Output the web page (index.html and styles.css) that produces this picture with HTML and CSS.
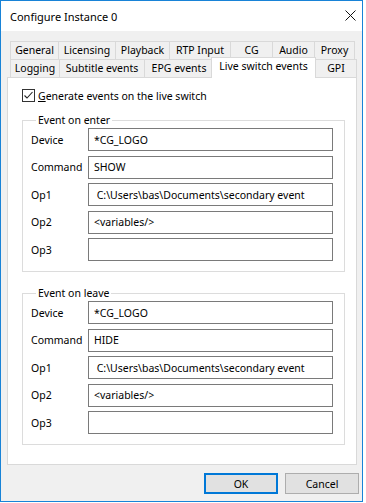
FILE: index.html
```html
<!DOCTYPE html>
<html lang="en">
<head>
    <meta charset="UTF-8">
    <meta name="viewport" content="width=device-width, initial-scale=1.0">
    <title>Configure Instance 0</title>
    <link rel="stylesheet" href="styles.css">
</head>
<body>
    <div class="window">
        <div class="titlebar">
            <span class="title">Configure Instance 0</span>
            <svg class="close" width="11" height="11" viewBox="0 0 11 11">
                <path d="M0.5 0.5 L10.5 10.5 M10.5 0.5 L0.5 10.5" stroke="#111" stroke-width="1" fill="none"/>
            </svg>
        </div>
        <div class="content">
            <div class="tabs">
                <div class="tabrow">
                    <div class="tab t-general">General</div>
                    <div class="tab t-licensing">Licensing</div>
                    <div class="tab t-playback">Playback</div>
                    <div class="tab t-rtp">RTP Input</div>
                    <div class="tab t-cg">CG</div>
                    <div class="tab t-audio">Audio</div>
                    <div class="tab t-proxy">Proxy</div>
                </div>
                <div class="tabrow">
                    <div class="tab t-logging">Logging</div>
                    <div class="tab t-subtitle">Subtitle events</div>
                    <div class="tab t-epg">EPG events</div>
                    <div class="tab t-live active">Live switch events</div>
                    <div class="tab t-gpi">GPI</div>
                </div>
            </div>
            <div class="panel">
                <label class="check">
                    <span class="box">
                        <svg width="11" height="11" viewBox="0 0 11 11">
                            <path d="M1.5 5.5 L4 8 L9.5 2" stroke="#222" stroke-width="1.1" fill="none"/>
                        </svg>
                    </span>
                    <span><u>G</u>enerate events on the live switch</span>
                </label>

                <fieldset class="group">
                    <legend>Event on enter</legend>
                    <div class="field"><label>Device</label><input type="text" value="*CG_LOGO"></div>
                    <div class="field"><label>Command</label><input type="text" value="SHOW"></div>
                    <div class="field"><label>Op1</label><input type="text" value=" C:\Users\bas\Documents\secondary event"></div>
                    <div class="field"><label>Op2</label><input type="text" value="&lt;variables/&gt;"></div>
                    <div class="field"><label>Op3</label><input type="text" value=""></div>
                </fieldset>

                <fieldset class="group leave">
                    <legend>Event on leave</legend>
                    <div class="field"><label>Device</label><input type="text" value="*CG_LOGO"></div>
                    <div class="field"><label>Command</label><input type="text" value="HIDE"></div>
                    <div class="field"><label>Op1</label><input type="text" value=" C:\Users\bas\Documents\secondary event"></div>
                    <div class="field"><label>Op2</label><input type="text" value="&lt;variables/&gt;"></div>
                    <div class="field"><label>Op3</label><input type="text" value=""></div>
                </fieldset>
            </div>
            <div class="buttons">
                <button class="btn default">OK</button>
                <button class="btn">Cancel</button>
            </div>
        </div>
    </div>
</body>
</html>
```

FILE: styles.css
```css
* {
    box-sizing: border-box;
}

body {
    margin: 0;
    padding: 0;
    background: #fff;
    font-family: "Noto Sans", "Open Sans", sans-serif;
    font-size: 10.5px;
    color: #000;
}

.window {
    width: 363px;
    height: 502px;
    border: 1px solid #1883d7;
    display: flex;
    flex-direction: column;
}

.titlebar {
    height: 30px;
    background: #fff;
    display: flex;
    align-items: center;
    justify-content: space-between;
    padding: 0 6px 0 9px;
}
.title {
    font-size: 11px;
    margin-top: 1px;
}
.close {
    display: block;
    margin-top: -1px;
}

.content {
    flex: 1;
    background: #f0f0f0;
    padding: 10px 3px 0 6px;
}

/* tabs */
.tabs {
    width: 350px;
    padding: 0 0 0 3px;
}
.tabrow {
    display: flex;
    align-items: flex-end;
    height: 18px;
}
.tab {
    flex: none;
    height: 18px;
    line-height: 17px;
    text-align: center;
    white-space: nowrap;
    border: 1px solid #d9d9d9;
    border-bottom: none;
    margin-right: -1px;
    background: #f0f0f0;
}
.tab.active {
    position: relative;
    z-index: 1;
    height: 21px;
    line-height: 17px;
    margin: 0 -1px -1px -2px;
    background: #fff;
}

.t-general { width: 49px; }
.t-licensing { width: 58px; }
.t-playback { width: 55px; }
.t-rtp { width: 62px; }
.t-cg { width: 43px; }
.t-audio { width: 43px; }
.t-proxy { width: 41px; }
.t-logging { width: 50px; }
.t-subtitle { width: 86px; }
.t-epg { width: 70px; }
.t-live { width: 105px; }
.t-gpi { width: 42px; }

/* panel */
.panel {
    position: relative;
    width: 350px;
    height: 388px;
    background: #fff;
    border: 1px solid #d9d9d9;
    padding: 11px 0 0 14px;
}

.check {
    display: flex;
    align-items: center;
    height: 13px;
    gap: 3px;
}
.box {
    width: 13px;
    height: 13px;
    border: 1px solid #333;
    background: #fff;
    display: block;
}
.box svg {
    display: block;
}

.group {
    width: 323px;
    margin: 11px 0 0 0;
    padding: 1px 10px 10px 8px;
    border: 1px solid #dcdcdc;
    min-width: 0;
}
.group.leave {
    margin-top: 14px;
}
.group legend {
    padding: 0 2px;
    margin-left: 5px;
    line-height: 14px;
}

.field {
    display: flex;
    align-items: center;
    margin-top: 4.5px;
}
.field:first-of-type {
    margin-top: 0;
}
.field label {
    width: 57px;
}
.field input {
    width: 245px;
    height: 23px;
    border: 1px solid #7a7a7a;
    padding: 0 5px;
    font-family: "Noto Sans", "Open Sans", sans-serif;
    font-size: 10.5px;
    color: #000;
    background: #fff;
    outline: none;
}

/* buttons */
.buttons {
    display: flex;
    justify-content: flex-end;
    gap: 7px;
    margin-top: 8px;
}
.btn {
    width: 74px;
    height: 21px;
    background: #e1e1e1;
    border: 1px solid #adadad;
    font-family: "Noto Sans", "Open Sans", sans-serif;
    font-size: 10.5px;
    color: #000;
    padding: 0;
}
.btn.default {
    border: 2px solid #0078d7;
}
```
